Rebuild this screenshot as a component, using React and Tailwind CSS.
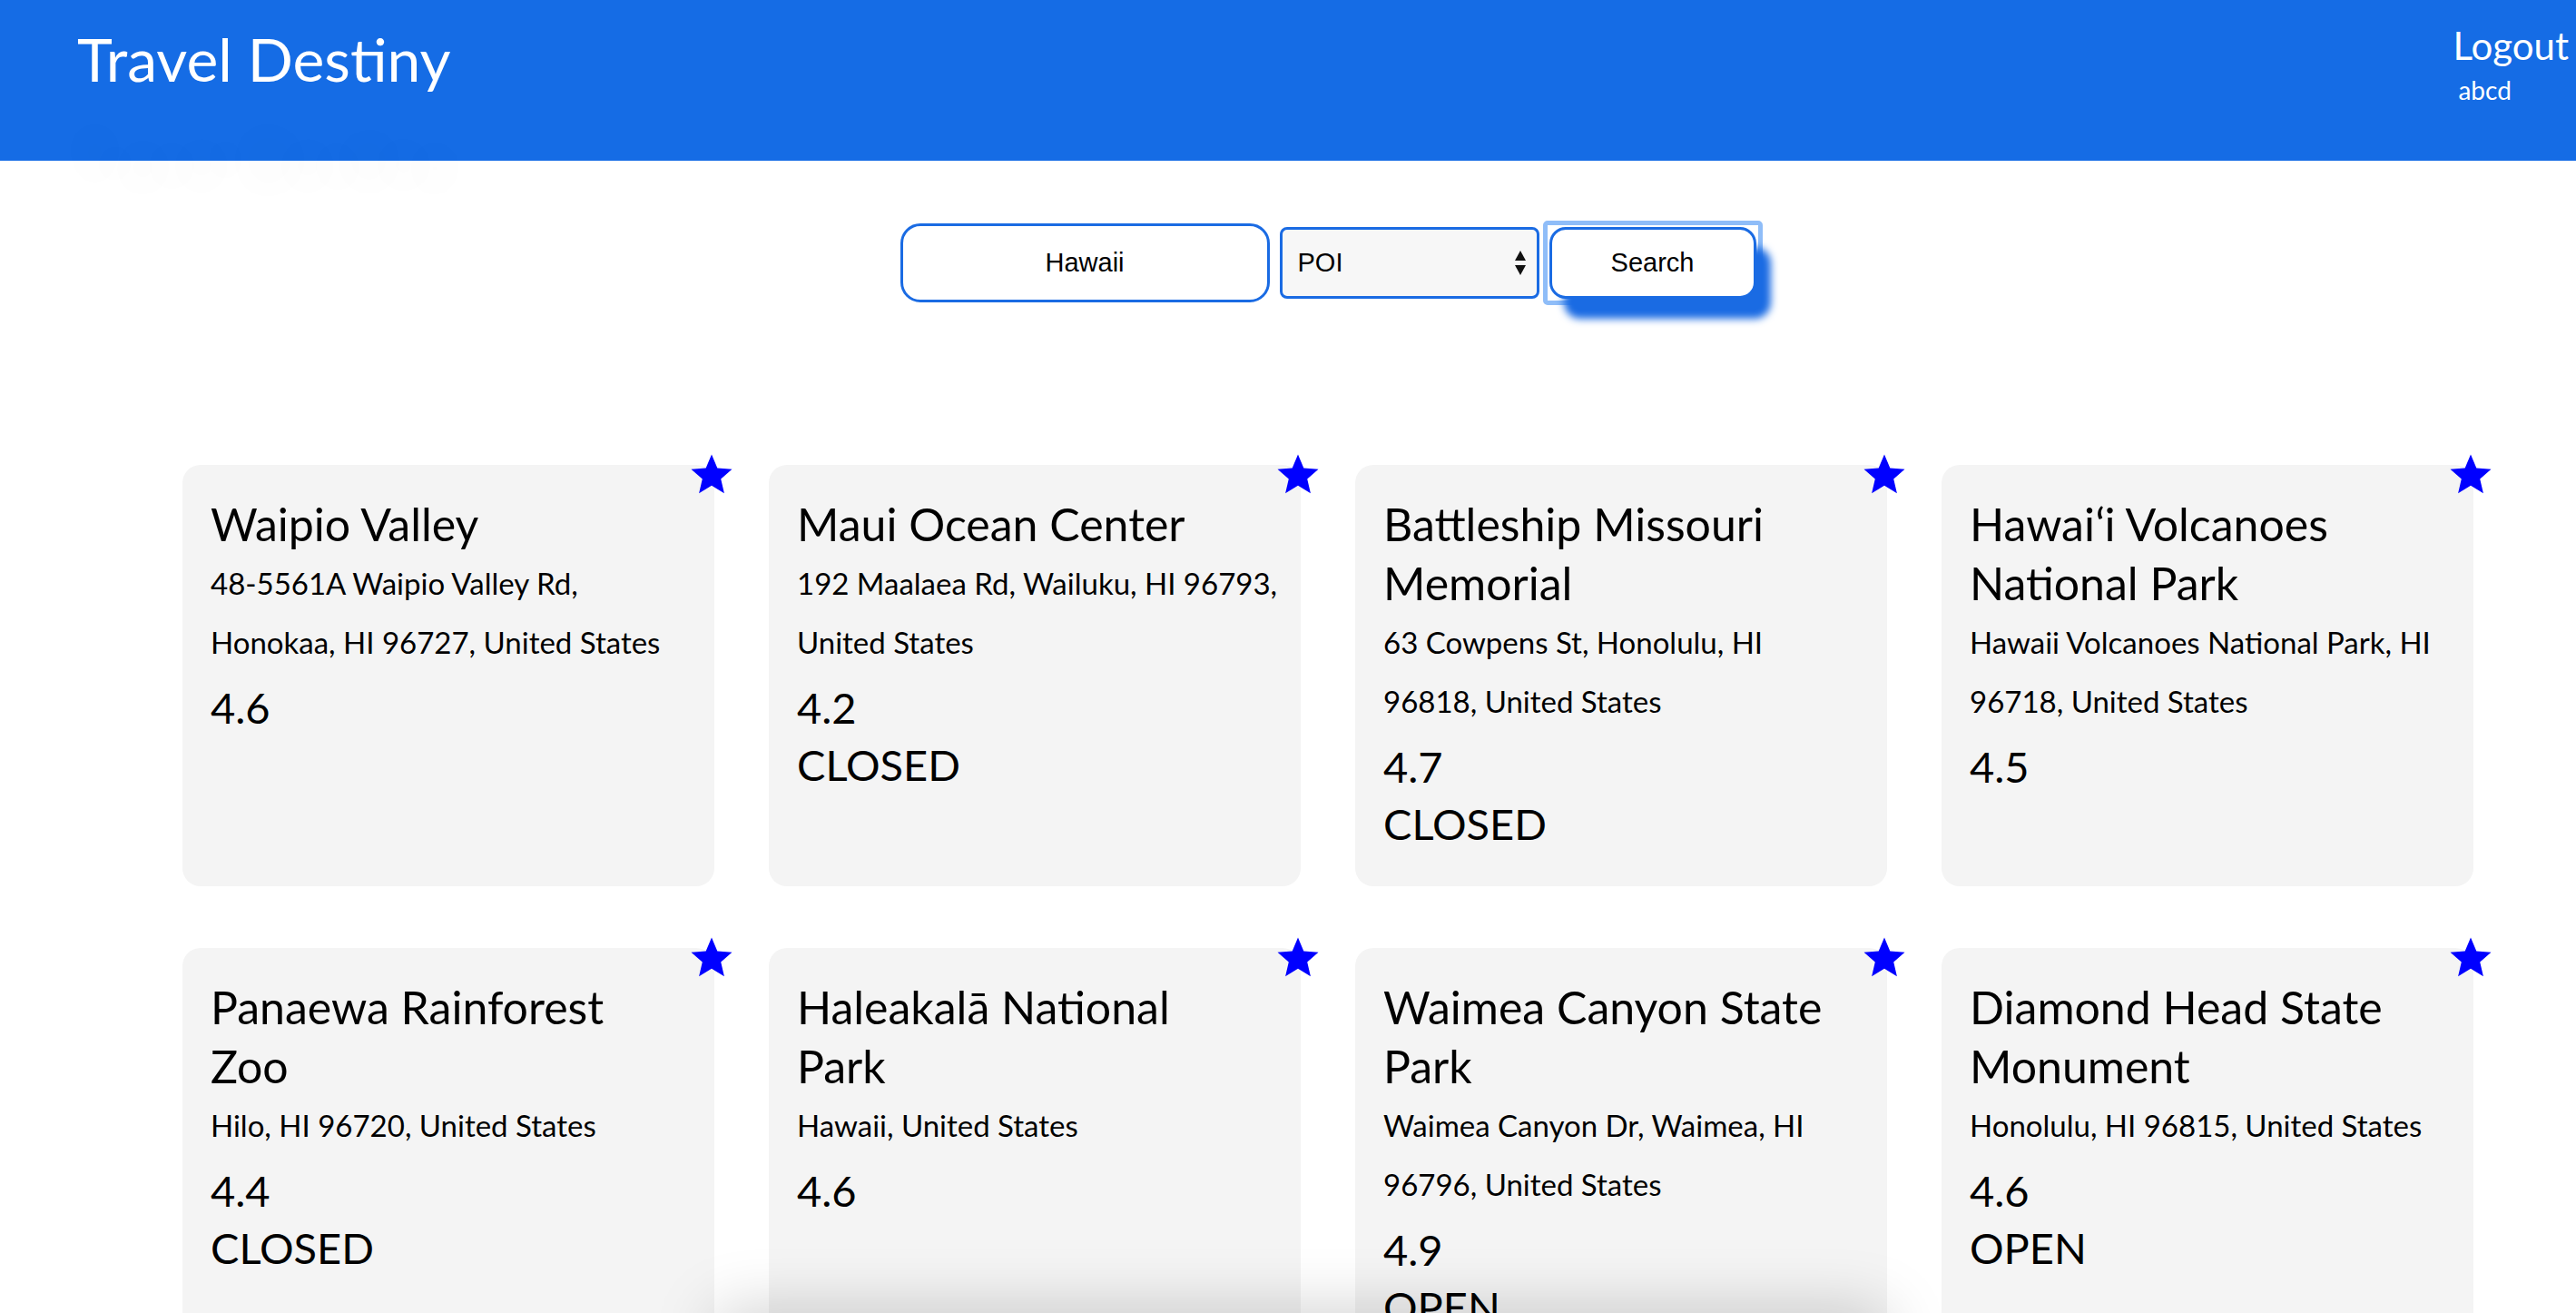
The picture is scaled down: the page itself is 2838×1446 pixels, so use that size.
import React from 'react';

const places = [
  { name: ['Waipio Valley'], address: ['48-5561A Waipio Valley Rd,', 'Honokaa, HI 96727, United States'], rating: '4.6' },
  { name: ['Maui Ocean Center'], address: ['192 Maalaea Rd, Wailuku, HI 96793,', 'United States'], rating: '4.2', status: 'CLOSED' },
  { name: ['Battleship Missouri', 'Memorial'], address: ['63 Cowpens St, Honolulu, HI', '96818, United States'], rating: '4.7', status: 'CLOSED' },
  { name: ['Hawaiʻi Volcanoes', 'National Park'], address: ['Hawaii Volcanoes National Park, HI', '96718, United States'], rating: '4.5' },
  { name: ['Panaewa Rainforest', 'Zoo'], address: ['Hilo, HI 96720, United States'], rating: '4.4', status: 'CLOSED' },
  { name: ['Haleakalā National', 'Park'], address: ['Hawaii, United States'], rating: '4.6' },
  { name: ['Waimea Canyon State', 'Park'], address: ['Waimea Canyon Dr, Waimea, HI', '96796, United States'], rating: '4.9', status: 'OPEN' },
  { name: ['Diamond Head State', 'Monument'], address: ['Honolulu, HI 96815, United States'], rating: '4.6', status: 'OPEN' },
];

const Star = () => (
  <svg viewBox="0 0 24 24" width="54" height="54" className="absolute -top-[16px] -right-[24px]">
    <path fill="#0000ff" d="M12 17.27L18.18 21l-1.64-7.03L22 9.24l-7.19-.61L12 2 9.19 8.63 2 9.24l5.46 4.73L5.82 21z" />
  </svg>
);

const PlaceCard = ({ place }) => (
  <div className="relative h-[464px] rounded-[20px] bg-[#f4f4f4] pl-[31px] pt-[33px] text-black">
    <Star />
    <h2 className="text-[50px] leading-[65px] whitespace-nowrap">
      {place.name.map((l, i) => <div key={i}>{l}</div>)}
    </h2>
    <div className="text-[33px] leading-[65px] whitespace-nowrap">
      {place.address.map((l, i) => <div key={i}>{l}</div>)}
    </div>
    <div className="mt-[8px] text-[47px] leading-[63px]">
      <div>{place.rating}</div>
      {place.status && <div>{place.status}</div>}
    </div>
  </div>
);

export default function App() {
  return (
    <div className="relative min-h-screen overflow-hidden bg-white [font-family:Lato,sans-serif]">
      <header className="flex h-[177px] items-start justify-between bg-[#156ce5] text-white">
        <div className="pl-[85px] pt-[25px] text-[66px] leading-[80px] [text-shadow:0_110px_40px_rgba(0,0,0,0.06)]">
          Travel Destiny
        </div>
        <div className="flex flex-col items-start pr-[8px] pt-[24px]">
          <span className="text-[42px] leading-[52px]">Logout</span>
          <span className="ml-[6px] mt-[6px] text-[28px] leading-[34px]">abcd</span>
        </div>
      </header>

      <div className="mt-[69px] flex h-[87px] items-center justify-center pl-[95px] [font-family:'Liberation_Sans',Arial,sans-serif] text-[29px] text-black">
        <div className="flex h-[87px] w-[407px] items-center justify-center rounded-[22px] border-[3px] border-[#1a6be3] bg-white">
          Hawaii
        </div>
        <div className="ml-[11px] flex h-[79px] w-[286px] items-center justify-between rounded-[8px] border-[3px] border-[#1a6be3] bg-[#f7f7f7] pl-[17px] pr-[11px]">
          <span>POI</span>
          <svg width="14" height="32" viewBox="0 0 14 32">
            <path d="M7 2 L13 13 L1 13 Z" fill="#111" />
            <path d="M1 18 L13 18 L7 29 Z" fill="#111" />
          </svg>
        </div>
        <div className="ml-[4px] rounded-[5px] border-[5px] border-[#8fbdf8] p-[2px]">
          <div className="flex h-[79px] w-[228px] items-center justify-center rounded-[18px] border-[3px] border-[#1a6be3] bg-white shadow-[16px_22px_9px_#1a6be3]">
            Search
          </div>
        </div>
      </div>

      <div className="mt-[179px] grid grid-cols-[repeat(4,586px)] gap-x-[60px] gap-y-[68px] pl-[201px]">
        {places.map((p, i) => <PlaceCard key={i} place={p} />)}
      </div>

      <div className="fixed left-[790px] top-[1446px] h-[60px] w-[1287px] shadow-[0_0_70px_rgba(0,0,0,0.22)]" />
    </div>
  );
}
